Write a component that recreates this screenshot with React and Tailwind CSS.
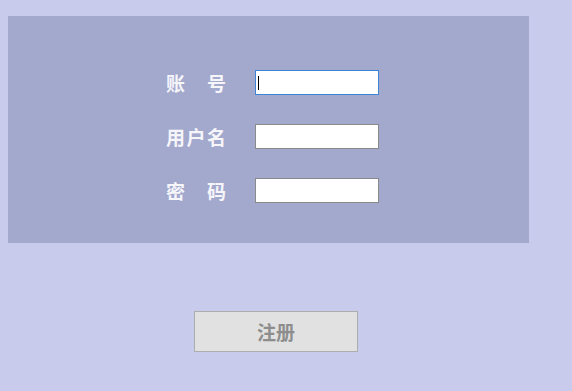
import React from 'react';

const fields = [
  { label: ['账', '号'], focused: true },
  { label: ['用', '户', '名'] },
  { label: ['密', '码'] },
];

const App = () => {
  return (
    <div
      className="min-h-screen w-full bg-[#c9cbec] pt-4 pl-2"
      style={{ fontFamily: '"Noto Sans CJK SC", "Noto Sans", sans-serif' }}
    >
      {/* Form panel */}
      <div className="w-[521px] h-[227px] bg-[#a3a8cd] pt-[54px] pl-[158px] flex flex-col gap-[29px]">
        {fields.map((f, i) => (
          <div key={i} className="flex items-center h-[25px]">
            <div className="w-[60px] flex justify-between text-[19px] leading-none text-[#f5f5fa] font-bold">
              {f.label.map((c) => (
                <span key={c}>{c}</span>
              ))}
            </div>
            <div
              className={
                'relative ml-[29px] w-[124px] h-[25px] bg-white border ' +
                (f.focused ? 'border-[#3d84d6]' : 'border-[#8a8a8a]')
              }
            >
              {f.focused && (
                <span className="absolute left-[2px] top-[5px] w-px h-[14px] bg-black" />
              )}
            </div>
          </div>
        ))}
      </div>

      {/* Submit */}
      <div className="pl-[186px] mt-[68px]">
        <button className="w-[164px] h-[41px] bg-[#e1e1e1] border border-[#adadad] text-[19px] text-[#8d8d8d] font-bold leading-none">
          注册
        </button>
      </div>
    </div>
  );
};

export default App;
